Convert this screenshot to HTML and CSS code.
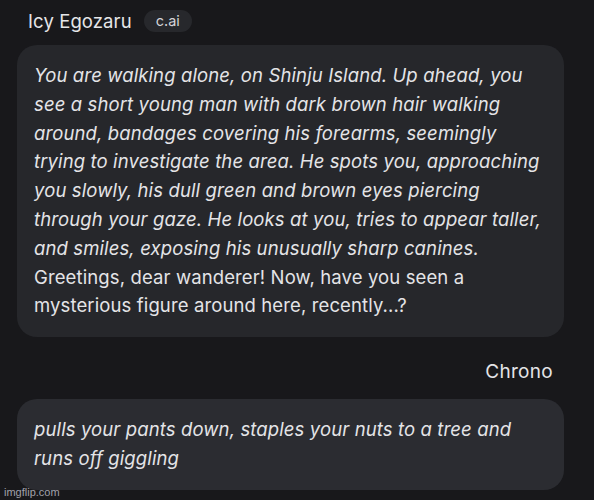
FILE: index.html
```html
<!DOCTYPE html>
<html>
<head>
<meta charset="utf-8">
<link rel="stylesheet" href="styles.css">
</head>
<body>
<div class="chat">
  <div class="msg-head">
    <span class="name">Icy Egozaru</span>
    <span class="badge">c.ai</span>
  </div>
  <div class="bubble bot">
    <p><em>You are walking alone, on Shinju Island. Up ahead, you<br>see a short young man with dark brown hair walking<br>around, bandages covering his forearms, seemingly<br>trying to investigate the area. He spots you, approaching<br>you slowly, his dull green and brown eyes piercing<br>through your gaze. He looks at you, tries to appear taller,<br>and smiles, exposing his unusually sharp canines.</em></p>
    <p>Greetings, dear wanderer! Now, have you seen a<br>mysterious figure around here, recently...?</p>
  </div>
  <div class="user-head">Chrono</div>
  <div class="bubble user">
    <p><em>pulls your pants down, staples your nuts to a tree and<br>runs off giggling</em></p>
  </div>
</div>
<div class="watermark">imgflip.com</div>
</body>
</html>
```
FILE: styles.css
```css
html, body {
  margin: 0;
  padding: 0;
  background: #18181b;
  height: 100%;
  overflow: hidden;
}
body {
  font-family: Inter, "Noto Sans", sans-serif;
  color: #e4e4e7;
  position: relative;
}
.chat {
  display: flex;
  flex-direction: column;
  padding: 9px 30px 0 17px;
}
.msg-head {
  display: flex;
  align-items: center;
  gap: 12px;
  padding-left: 11px;
  height: 24px;
}
.name {
  font-size: 18.5px;
  color: #e6e6e8;
  letter-spacing: 0.1px;
}
.badge {
  font-size: 14.5px;
  background: #27282c;
  color: #d4d4d8;
  border-radius: 12px;
  padding: 3px 12px 3px 12px;
  line-height: 16px;
}
.bubble {
  background: #26272b;
  border-radius: 20px;
  padding: 16px 10px 17px 17px;
  font-size: 18.5px;
  line-height: 28.8px;
  letter-spacing: 0.12px;
  white-space: nowrap;
}
.bubble p {
  margin: 0;
}
.bubble em {
  font-style: italic;
}
.bot {
  margin-top: 12px;
}
.user-head {
  text-align: right;
  font-size: 19px;
  letter-spacing: 0.3px;
  padding-right: 11px;
  margin-top: 23px;
  line-height: 24px;
}
.user {
  margin-top: 15px;
  background: #2b2c31;
}
.watermark {
  position: absolute;
  left: 4px;
  bottom: 2px;
  font-family: "Liberation Sans", Arial, sans-serif;
  font-size: 11px;
  color: #a1a1aa;
}
```
